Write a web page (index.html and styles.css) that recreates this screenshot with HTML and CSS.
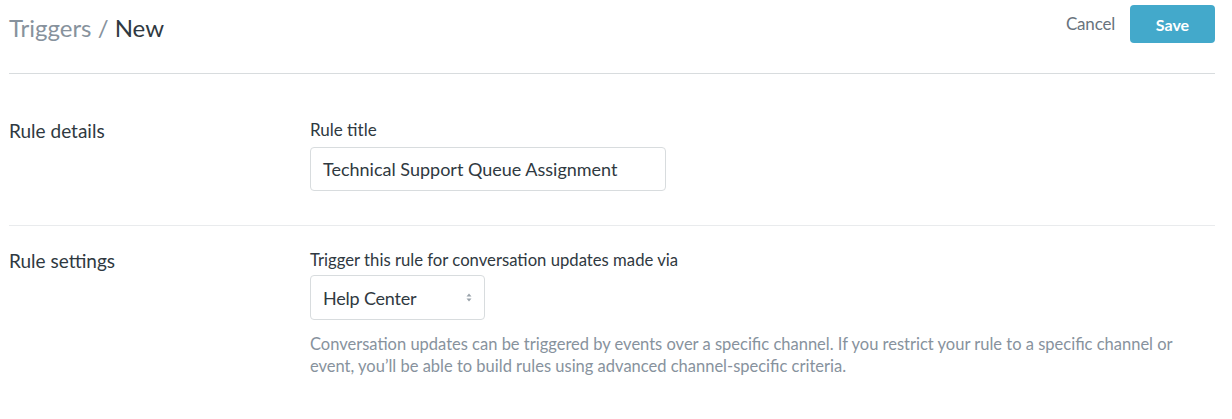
FILE: index.html
```html
<!DOCTYPE html>
<html>
<head>
<meta charset="utf-8">
<link rel="stylesheet" href="styles.css">
</head>
<body>
<div class="page">
  <header class="header">
    <h1 class="crumbs"><span class="crumb-parent">Triggers</span> <span class="crumb-sep">/</span> <span class="crumb-current">New</span></h1>
    <div class="actions">
      <a class="cancel">Cancel</a>
      <button class="save">Save</button>
    </div>
  </header>
  <section class="row row-details">
    <div class="row-label">Rule details</div>
    <div class="row-body">
      <label class="field-label">Rule title</label>
      <div class="input">Technical Support Queue Assignment</div>
    </div>
  </section>
  <section class="row row-settings">
    <div class="row-label">Rule settings</div>
    <div class="row-body">
      <label class="field-label field-label-tight">Trigger this rule for conversation updates made via</label>
      <div class="select">
        <span>Help Center</span>
        <svg class="caret" width="6" height="9" viewBox="0 0 6 9"><path d="M3 0.5 L5.5 3.5 H0.5 Z" fill="#9aa3ab"/><path d="M3 8.5 L5.5 5.5 H0.5 Z" fill="#9aa3ab"/></svg>
      </div>
      <p class="hint">Conversation updates can be triggered by events over a specific channel. If you restrict your rule to a specific channel or event, you’ll be able to build rules using advanced channel-specific criteria.</p>
    </div>
  </section>
</div>
</body>
</html>
```
FILE: styles.css
```css
* { box-sizing: border-box; }
body {
  margin: 0;
  background: #fff;
  font-family: "Lato", "Liberation Sans", sans-serif;
  color: #2f3941;
}
.page {
  padding: 0 17px 0 9px;
}
.header {
  display: flex;
  justify-content: space-between;
  align-items: flex-start;
  height: 74px;
  border-bottom: 1px solid #d8dcde;
}
.crumbs {
  margin: 13px 0 0 0;
  font-size: 24px;
  font-weight: 400;
  line-height: 30px;
}
.crumb-parent, .crumb-sep { color: #87929d; }
.crumb-current { color: #2f3941; }
.actions {
  display: flex;
  align-items: center;
  margin-top: 5px;
  gap: 15px;
}
.cancel {
  font-size: 17px;
  color: #68737d;
  letter-spacing: -0.2px;
  margin-top: -1px;
}
.save {
  width: 85px;
  height: 38px;
  border: none;
  border-radius: 4px;
  background: #43a9cb;
  color: #fff;
  font-family: inherit;
  font-size: 16px;
  font-weight: 700;
}
.row {
  display: flex;
}
.row-details {
  height: 152px;
  border-bottom: 1px solid #e9ebed;
  padding-top: 45px;
}
.row-settings {
  padding-top: 23px;
}
.row-label {
  width: 301px;
  font-size: 19px;
  line-height: 24px;
}
.row-body {
  flex: 1;
}
.field-label {
  display: block;
  font-size: 17px;
  line-height: 22px;
  margin-bottom: 6px;
}
.field-label-tight {
  font-size: 16.7px;
  margin-bottom: 4px;
}
.input {
  width: 356px;
  height: 44px;
  border: 1px solid #d8dcde;
  border-radius: 4px;
  padding: 0 12px;
  font-size: 18px;
  line-height: 42px;
}
.select {
  display: flex;
  align-items: center;
  justify-content: space-between;
  width: 175px;
  height: 45px;
  border: 1px solid #d8dcde;
  border-radius: 4px;
  padding: 0 12px;
  font-size: 18px;
  letter-spacing: -0.2px;
}
.hint {
  margin: 13px 0 0 0;
  font-size: 16.5px;
  line-height: 22px;
  color: #87929d;
  max-width: 880px;
}
```
